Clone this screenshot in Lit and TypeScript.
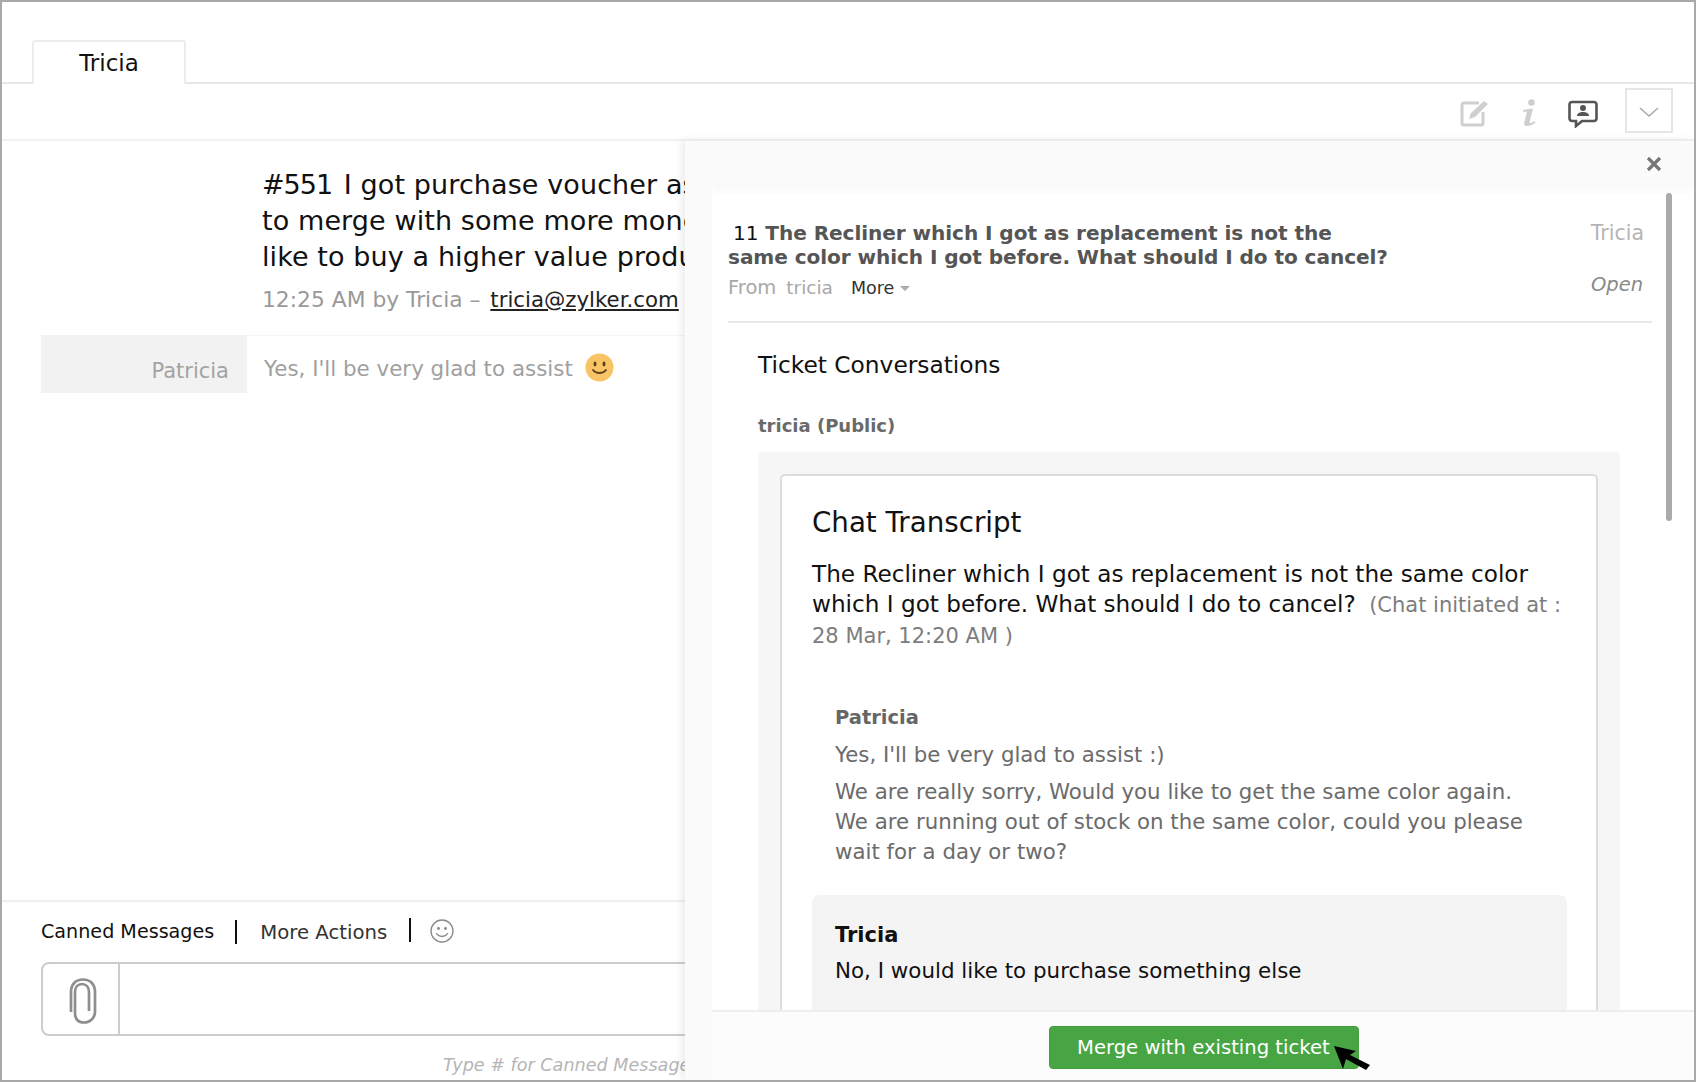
import { LitElement, html, css } from "lit";
import { customElement } from "lit/decorators.js";

@customElement("app-root")
export class AppRoot extends LitElement {
  static styles = css`
    :host { display: block; width: 1696px; height: 1082px; position: relative; overflow: hidden; background: #fff; box-sizing: border-box; border: 2px solid #a9a9a9; font-family: "DejaVu Sans", sans-serif; color: #111; }
    * { box-sizing: border-box; }
    .page { display: flex; flex-direction: column; height: 100%; }
    .tabs { height: 82px; padding: 38px 0 0 30px; border-bottom: 2px solid #e8e8e8; flex: none; display: flex; }
    .tab { width: 154px; height: 44px; border: 2px solid #ececec; border-bottom: none; border-radius: 3px 3px 0 0; text-align: center; font-size: 23px; line-height: 42px; background: #fff; }
    .toolbar { height: 57px; flex: none; border-bottom: 2px solid #f1f1f1; display: flex; justify-content: flex-end; align-items: center; padding: 3px 21px 0 0; }
    .tool { display: block; }
    .t1 { margin-right: 31px; }
    .t2 { margin-right: 31px; }
    .t3 { margin-right: 27px; margin-top: 1px; }
    .drop { width: 48px; height: 45px; border: 2px solid #e6e6e6; display: flex; align-items: center; justify-content: center; padding-top: 3px; margin-top: -5px; }
    .main { flex: 1; padding: 0 0 0 39px; overflow: hidden; }
    .msg { padding: 26px 0 0 221px; white-space: nowrap; }
    .subject { font-size: 27px; line-height: 36px; color: #111; letter-spacing: .1px; }
    .num { letter-spacing: -1px; margin-right: 3px; }
    .meta { margin-top: 10px; font-size: 21.8px; line-height: 30px; color: #999; }
    .meta a { color: #222; text-decoration: underline; font-size: 21.3px; margin-left: 3px; }
    .row { display: flex; margin-top: 20px; height: 58px; }
    .who { width: 206px; background: #f2f2f2; text-align: right; padding: 22px 18px 0 0; font-size: 21px; line-height: 28px; color: #a3a3a3; }
    .said { flex: 1; display: flex; align-items: flex-start; padding: 18px 0 0 17px; border-top: 1px solid #f5f5f5; font-size: 21.4px; line-height: 30px; color: #a0a0a0; white-space: nowrap; }
    .said svg { margin: -1px 0 0 12px; }
    .composer { height: 180px; flex: none; border-top: 2px solid #efefef; padding: 0 0 0 39px; position: relative; }
    .actions { display: flex; height: 58px; align-items: center; font-size: 19.15px; }
    .actions .c { color: #111; }
    .actions .m { color: #333; margin-top: 3px; font-size: 19.7px; }
    .sep { width: 2px; height: 24px; background: #111; margin: 2px 23px 0 21px; }
    .sep.b { margin: -2px 19px 0 22px; }
    .input { width: 900px; height: 74px; margin-top: 2px; border: 2px solid #ccc; border-radius: 8px; display: flex; }
    .clip { width: 77px; border-right: 2px solid #ccc; display: flex; align-items: center; justify-content: center; padding: 3px 0 0 4px; }
    .hint { position: absolute; left: 441px; top: 149px; font-size: 17.6px; font-style: italic; line-height: 28px; color: #b5b5b5; white-space: nowrap; }

    .panel { position: absolute; left: 683px; top: 138px; right: 0; bottom: 0; background: #fbfbfb; border-top: 1px solid #eee; box-shadow: -4px 0 8px rgba(0,0,0,.07); display: flex; flex-direction: column; }
    .phead { height: 47px; flex: none; position: relative; z-index: 1; display: flex; justify-content: flex-end; padding: 15px 32px 0 0; }
    .phead::after { content: ""; position: absolute; left: 27px; right: 0; bottom: 0; height: 1px; box-shadow: 0 2px 6px rgba(0,0,0,.14); }
    .pbody { flex: 1; margin-left: 27px; background: #fff; overflow: hidden; position: relative; padding: 33px 42px 0 15px; }
    .scroll { position: absolute; right: 22px; top: 5px; width: 6px; height: 328px; border-radius: 3px; background: #aaa; }
    .thead { display: flex; justify-content: space-between; }
    .ttl { font-size: 20.1px; line-height: 24px; font-weight: bold; color: #555; white-space: nowrap; letter-spacing: -.08px; padding-left: 1px; }
    .ttl b { font-weight: normal; color: #111; padding-left: 5px; }
    .tr { text-align: right; padding-right: 8px; }
    .owner { color: #b5b5b5; line-height: 24px; font-size: 20.5px; }
    .status { color: #8a8a8a; font-style: italic; line-height: 24px; margin-top: 28px; font-size: 19.5px; padding-right: 1px; }
    .from { margin-top: -21px; height: 24px; font-size: 19.5px; line-height: 24px; color: #a8a8a8; display: flex; align-items: center; padding-left: 1px; }
    .from .t { margin-left: 10px; font-size: 18.5px; }
    .from .more { margin-left: 18px; color: #333; font-size: 17.5px; }
    .from svg { margin-left: 6px; }
    .rule { height: 2px; background: #e9e9e9; margin: 21px 0 0 1px; }
    .conv { padding: 0 0 0 31px; }
    .ch { margin-top: 27px; font-size: 23.3px; line-height: 30px; color: #111; }
    .pub { margin-top: 34px; font-size: 18px; line-height: 24px; font-weight: bold; color: #6a6a6a; }
    .box { margin: 14px 0 0 0; width: 862px; padding: 22px 22px 0 22px; background: #f6f6f6; border-radius: 5px 5px 0 0; }
    .card { background: #fff; border: 2px solid #dcdcdc; border-bottom: none; border-radius: 5px 5px 0 0; padding: 29px 29px 0 30px; height: 700px; }
    .h { font-size: 27.7px; line-height: 36px; color: #111; }
    .p { margin-top: 18px; font-size: 23.15px; line-height: 30px; color: #111; }
    .p span { font-size: 21px; color: #7d7d7d; margin-left: 6px; }
    .tr2 { padding-left: 23px; }
    .nm { margin-top: 55px; font-size: 19.5px; line-height: 24px; font-weight: bold; color: #666; }
    .l1, .l2 { font-size: 21.3px; line-height: 30px; color: #6b6b6b; }
    .l1 { margin-top: 10px; }
    .l2 { margin-top: 7px; }
    .block { margin-top: 28px; background: #f4f4f4; border-radius: 8px; padding: 28px 23px 60px; }
    .block .nb { font-size: 21px; line-height: 24px; font-weight: bold; color: #111; }
    .block .tx { margin-top: 9px; font-size: 21.4px; line-height: 30px; color: #111; }
    .pfoot { height: 70px; flex: none; margin-left: 27px; background: #fcfcfc; border-top: 2px solid #eee; position: relative; padding: 14px 0 0 337px; }
    .btn { width: 310px; height: 43px; background: #48a544; border: 1px solid #429c3e; border-radius: 4px; color: #fff; font-size: 19.6px; line-height: 42px; padding-left: 27px; white-space: nowrap; }
    .cursor { position: absolute; left: 622px; top: 34px; }
  `;

  render() {
    return html`
      <div class="page">
        <div class="tabs"><div class="tab">Tricia</div></div>
        <div class="toolbar">
          <svg class="tool t1" width="30" height="28" viewBox="0 0 30 28" fill="none"><path d="M19 4H4a2 2 0 0 0-2 2v18a2 2 0 0 0 2 2h17a2 2 0 0 0 2-2V13" stroke="#cfcfcf" stroke-width="3"/><path d="M9 20l2-6L24 2l4 3-13 13z" fill="#cfcfcf"/></svg>
          <svg class="tool t2" width="16" height="28" viewBox="0 0 16 28"><circle cx="10.500" cy="3.500" r="3.300" fill="#cfcfcf"/><path d="M2 11l10-1.500-3.500 14c0 1 1 1 5-1.500l1 1.500c-4 4-12 5-11.500 1l3-12-3.500.5z" fill="#cfcfcf"/></svg>
          <svg class="tool t3" width="30" height="28" viewBox="0 0 30 28" fill="none"><path d="M4 2h22a2.500 2.500 0 0 1 2.500 2.500v14A2.500 2.500 0 0 1 26 21H14l-6 5v-5H4a2.500 2.500 0 0 1-2.500-2.500v-14A2.500 2.500 0 0 1 4 2z" stroke="#555" stroke-width="2.600"/><circle cx="15" cy="8" r="3" fill="#555"/><path d="M9 16c0-3 3-4 6-4s6 1 6 4z" fill="#555"/></svg>
          <div class="drop"><svg width="20" height="11" viewBox="0 0 20 11" fill="none"><path d="M1 1l9 8 9-8" stroke="#aaa" stroke-width="1.600"/></svg></div>
        </div>
        <div class="main">
          <div class="msg">
            <div class="subject"><span class="num">#551</span> I got purchase voucher as<br />to merge with some more money<br />like to buy a higher value product</div>
            <div class="meta">12:25 AM by Tricia – <a>tricia@zylker.com</a></div>
          </div>
          <div class="row">
            <div class="who">Patricia</div>
            <div class="said">Yes, I'll be very glad to assist
              <svg width="29" height="29" viewBox="0 0 29 29"><ellipse cx="14.500" cy="14.500" rx="14" ry="14" fill="#f9c466"/><ellipse cx="10" cy="11" rx="1.500" ry="2.400" fill="#5a4318"/><ellipse cx="19" cy="11" rx="1.500" ry="2.400" fill="#5a4318"/><path d="M8 17c3 4 10 4 13 0" fill="none" stroke="#5a4318" stroke-width="1.800" stroke-linecap="round"/></svg>
            </div>
          </div>
        </div>
        <div class="composer">
          <div class="actions">
            <span class="c">Canned Messages</span><span class="sep"></span><span class="m">More Actions</span><span class="sep b"></span>
            <svg width="24" height="24" viewBox="0 0 24 24" fill="none" stroke="#888" stroke-width="1.300"><circle cx="12" cy="12" r="11"/><circle cx="8.500" cy="9.500" r=".8" fill="#888"/><circle cx="15.500" cy="9.500" r=".8" fill="#888"/><path d="M6.500 14.500c2.500 4 8.500 4 11 0" stroke-linecap="round"/></svg>
          </div>
          <div class="input"><div class="clip">
            <svg width="28" height="46" viewBox="0 0 28 46" fill="none" stroke="#8e8e8e" stroke-width="2.700"><path d="M2 34V14C2 6 7 1.500 14 1.500S26 6 26 14v20c0 6-5 10.500-11 10.500S6 41 6 35V14c0-5 3-8 7-8s7 3 7 8v19"/></svg>
          </div></div>
          <div class="hint">Type # for Canned Messages</div>
        </div>
      </div>
      <div class="panel">
        <div class="phead">
          <svg width="16" height="16" viewBox="0 0 16 16"><path d="M2 2l12 12M14 2L2 14" stroke="#777" stroke-width="3.200"/></svg>
        </div>
        <div class="pbody">
          <div class="scroll"></div>
          <div class="thead">
            <div class="ttl"><b>11</b> The Recliner which I got as replacement is not the<br />same color which I got before. What should I do to cancel?</div>
            <div class="tr"><div class="owner">Tricia</div><div class="status">Open</div></div>
          </div>
          <div class="from"><span>From</span><span class="t">tricia</span><span class="more">More</span><svg width="10" height="5" viewBox="0 0 10 5"><path d="M0 0h10L5 5z" fill="#aaa"/></svg></div>
          <div class="rule"></div>
          <div class="conv">
            <div class="ch">Ticket Conversations</div>
            <div class="pub">tricia (Public)</div>
            <div class="box">
              <div class="card">
                <div class="h">Chat Transcript</div>
                <div class="p">The Recliner which I got as replacement is not the same color which I got before. What should I do to cancel? <span>(Chat initiated at : 28 Mar, 12:20 AM )</span></div>
                <div class="tr2 nm">Patricia</div>
                <div class="tr2 l1">Yes, I'll be very glad to assist :)</div>
                <div class="tr2 l2">We are really sorry, Would you like to get the same color again.<br />We are running out of stock on the same color, could you please<br />wait for a day or two?</div>
                <div class="block">
                  <div class="nb">Tricia</div>
                  <div class="tx">No, I would like to purchase something else</div>
                </div>
              </div>
            </div>
          </div>
        </div>
        <div class="pfoot">
          <div class="btn">Merge with existing ticket</div>
          <svg class="cursor" width="36" height="24" viewBox="0 0 36 24"><path d="M0 0l22 5-6 4L36 19l-4 5L12 13l-3 10z" fill="#000"/></svg>
        </div>
      </div>
    `;
  }
}
